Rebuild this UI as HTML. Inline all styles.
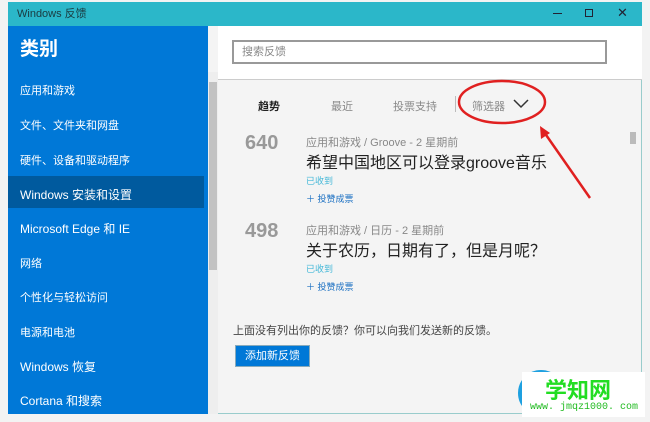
<!DOCTYPE html>
<html><head><meta charset="utf-8"><style>
*{margin:0;padding:0;box-sizing:border-box}
body{width:650px;height:422px;background:#f3f3f3;position:relative;overflow:hidden;font-family:"Liberation Sans","Noto Sans CJK SC",sans-serif}
.a{position:absolute}
.win{left:8px;top:2px;width:634px;height:412px;background:#f4f4f4;border:1px solid #9cc;}
.title{left:8px;top:2px;width:634px;height:24px;background:#2bb7c9;color:#1a3a40;font-size:11px;line-height:24px;padding-left:9px}
.side{left:8px;top:26px;width:200px;height:388px;background:#0078d7;color:#fff}
.side .h{position:absolute;left:12px;top:8px;font-size:19px;font-weight:bold}
.side .it{position:absolute;left:12px;font-size:11px}
.sel{left:8px;top:176px;width:196px;height:32px;background:#005a9e}
.top{left:218px;top:26px;width:424px;height:54px;background:#fff;border-bottom:1px solid #ccc}
.search{left:232px;top:40px;width:375px;height:24px;border:2px solid #999;background:#fff;font-size:11px;color:#888;line-height:20px;padding-left:8px}
.g{color:#888;font-size:11px}
.n{font-size:20px;font-weight:bold;color:#999}
.t{font-size:16px;color:#222}
.c{font-size:9px;color:#44b8d8}
.v{font-size:9px;color:#1a6fc2}
</style></head><body>
<div class="a win"></div>
<div class="a title">Windows 反馈</div>
<div class="a" style="left:553px;top:13px;width:9px;height:1px;background:#223"></div>
<div class="a" style="left:585px;top:9px;width:8px;height:8px;border:1px solid #223"></div>
<div class="a" style="left:617px;top:5px;font-size:13px;color:#223">✕</div>
<div class="a side"></div>
<div class="a sel"></div>
<div class="a side" style="background:none">
<div class="h">类别</div>
<div class="it" style="top:56px">应用和游戏</div>
<div class="it" style="top:91px">文件、文件夹和网盘</div>
<div class="it" style="top:126px">硬件、设备和驱动程序</div>
<div class="it" style="top:160px;font-size:12px">Windows 安装和设置</div>
<div class="it" style="top:194px;font-size:12px">Microsoft Edge 和 IE</div>
<div class="it" style="top:229px">网络</div>
<div class="it" style="top:263px">个性化与轻松访问</div>
<div class="it" style="top:298px">电源和电池</div>
<div class="it" style="top:332px;font-size:12px">Windows 恢复</div>
<div class="it" style="top:366px;font-size:12px">Cortana 和搜索</div>
</div>
<div class="a" style="left:208px;top:72px;width:10px;height:342px;background:#eee"></div>
<div class="a" style="left:209px;top:82px;width:8px;height:188px;background:#c2c2c2"></div>
<div class="a top"></div>
<div class="a search">搜索反馈</div>
<div class="a" style="left:258px;top:98px;font-size:11px;font-weight:bold;color:#222">趋势</div>
<div class="a g" style="left:331px;top:98px">最近</div>
<div class="a g" style="left:393px;top:98px">投票支持</div>
<div class="a" style="left:455px;top:96px;width:1px;height:16px;background:#bbb"></div>
<div class="a g" style="left:472px;top:98px">筛选器</div>
<svg class="a" style="left:512px;top:98px" width="18" height="12"><path d="M2 2 L9 9 L16 2" stroke="#333" stroke-width="1.5" fill="none"/></svg>
<svg class="a" style="left:440px;top:78px" width="200" height="130"><ellipse cx="62" cy="24" rx="43" ry="21" stroke="#e02020" stroke-width="2.5" fill="none"/><path d="M150 120 L104 54" stroke="#e02020" stroke-width="2.5"/><path d="M100 48 L101 61 L110 55 Z" fill="#e02020"/></svg>
<div class="a n" style="left:245px;top:132px">640</div>
<div class="a g" style="left:306px;top:134px">应用和游戏 / Groove - 2 星期前</div>
<div class="a t" style="left:306px;top:149px">希望中国地区可以登录groove音乐</div>
<div class="a c" style="left:306px;top:174px">已收到</div>
<div class="a v" style="left:306px;top:192px">＋ 投赞成票</div>
<div class="a n" style="left:245px;top:220px">498</div>
<div class="a g" style="left:306px;top:222px">应用和游戏 / 日历 - 2 星期前</div>
<div class="a t" style="left:306px;top:237px">关于农历，日期有了，但是月呢？</div>
<div class="a c" style="left:306px;top:262px">已收到</div>
<div class="a v" style="left:306px;top:280px">＋ 投赞成票</div>
<div class="a" style="left:630px;top:132px;width:6px;height:12px;background:#bbb"></div>
<div class="a" style="left:233px;top:322px;font-size:11px;color:#444">上面没有列出你的反馈？你可以向我们发送新的反馈。</div>
<div class="a" style="left:235px;top:345px;width:75px;height:22px;background:#0078d7;border:1px solid #8ab;color:#fff;font-size:11px;line-height:20px;text-align:center">添加新反馈</div>
<div class="a" style="left:518px;top:370px;width:46px;height:46px;border-radius:50%;border:5px solid #1ea0e0"></div>
<div class="a" style="left:522px;top:372px;width:123px;height:45px;background:#fff"></div>
<div class="a" style="left:545px;top:373px;font-size:22px;font-weight:bold;color:#22dd22">学知网</div>
<div class="a" style="left:530px;top:402px;font-size:10px;color:#22bb22;font-family:'Liberation Mono',monospace">www. jmqz1000. com</div>
</body></html>
